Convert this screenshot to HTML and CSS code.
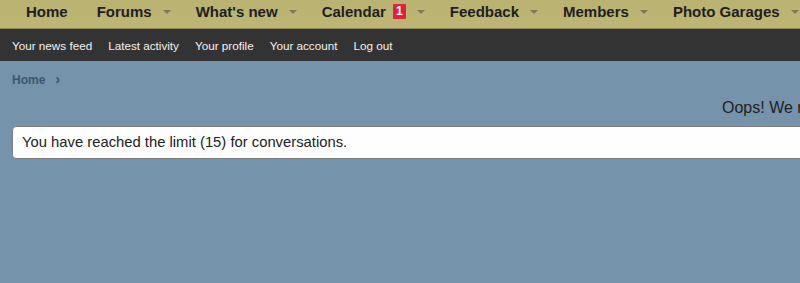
FILE: index.html
```html
<!DOCTYPE html>
<html lang="en">
<head>
    <meta charset="UTF-8">
    <title>Oops! We ran into some problems.</title>
    <link rel="stylesheet" href="styles.css">
</head>
<body>

    <!-- Main navigation -->
    <nav class="nav-main">
        <a class="nav-tab nav-home" href="#">Home</a>
        <a class="nav-tab" href="#">Forums<span class="nav-arrow"></span></a>
        <a class="nav-tab" href="#">What's new<span class="nav-arrow"></span></a>
        <a class="nav-tab" href="#">Calendar<span class="nav-badge">1</span><span class="nav-arrow"></span></a>
        <a class="nav-tab" href="#">Feedback<span class="nav-arrow"></span></a>
        <a class="nav-tab" href="#">Members<span class="nav-arrow"></span></a>
        <a class="nav-tab" href="#">Photo Garages<span class="nav-arrow"></span></a>
    </nav>

    <!-- Sub navigation -->
    <div class="nav-sub">
        <a href="#">Your news feed</a>
        <a href="#">Latest activity</a>
        <a href="#">Your profile</a>
        <a href="#">Your account</a>
        <a href="#">Log out</a>
    </div>

    <div class="page-body">
        <div class="breadcrumb">
            <a href="#">Home</a><span class="crumb-sep">&rsaquo;</span>
        </div>

        <h1 class="page-title">Oops! We ran into some problems.</h1>

        <div class="block-message">You have reached the limit (15) for conversations.</div>
    </div>

</body>
</html>
```

FILE: styles.css
```css
/* --- General --- */
html, body {
    margin: 0;
    padding: 0;
    overflow: hidden;
}

body {
    font-family: Tahoma, "Liberation Sans", Arial, sans-serif;
    background-color: #7593ab;
    color: #222;
    width: 800px;
    height: 283px;
}

a {
    text-decoration: none;
    color: inherit;
}

/* --- Main nav (gold bar) --- */
.nav-main {
    box-sizing: border-box;
    display: flex;
    align-items: center;
    height: 29px;
    padding: 0 0 5px 14px;
    background: linear-gradient(to bottom, #b9b270, #bdb675);
    border-bottom: 1px solid #8c8658;
    white-space: nowrap;
}

.nav-tab {
    display: flex;
    align-items: center;
    padding: 0 13px 0 12px;
    font-size: 15px;
    font-weight: bold;
    color: #1e1e1e;
    flex-shrink: 0;
}

.nav-home {
    padding-right: 17px;
}

.nav-arrow {
    display: inline-block;
    width: 0;
    height: 0;
    margin-left: 11px;
    border-left: 4px solid transparent;
    border-right: 4px solid transparent;
    border-top: 4px solid #7d7957;
}

.nav-badge {
    display: inline-block;
    margin-left: 7px;
    width: 13px;
    height: 15px;
    line-height: 15px;
    text-align: center;
    font-size: 12px;
    color: #fff;
    background-color: #e0213b;
    border-radius: 1px;
}

/* --- Sub nav (dark bar) --- */
.nav-sub {
    display: flex;
    align-items: center;
    gap: 16px;
    height: 32px;
    padding-left: 12px;
    background-color: #333333;
}

.nav-sub a {
    font-size: 11.7px;
    color: #f2f2f2;
}

/* --- Page body --- */
.page-body {
    padding: 0 0 0 12px;
}

.breadcrumb {
    display: flex;
    align-items: center;
    height: 38px;
    font-size: 12px;
    font-weight: bold;
    color: #3d566c;
}

.crumb-sep {
    margin-left: 10px;
    padding-bottom: 3px;
    font-size: 15px;
}

.page-title {
    margin: 0;
    height: 27px;
    padding-left: 710px;
    font-size: 16px;
    font-weight: normal;
    line-height: 18px;
    color: #222;
    white-space: nowrap;
}

.block-message {
    width: 900px;
    padding: 0 9px;
    height: 31px;
    line-height: 31px;
    font-size: 14.8px;
    color: #222;
    background-color: #fefefe;
    border: 1px solid #7d7d7d;
    border-radius: 4px;
}
```
